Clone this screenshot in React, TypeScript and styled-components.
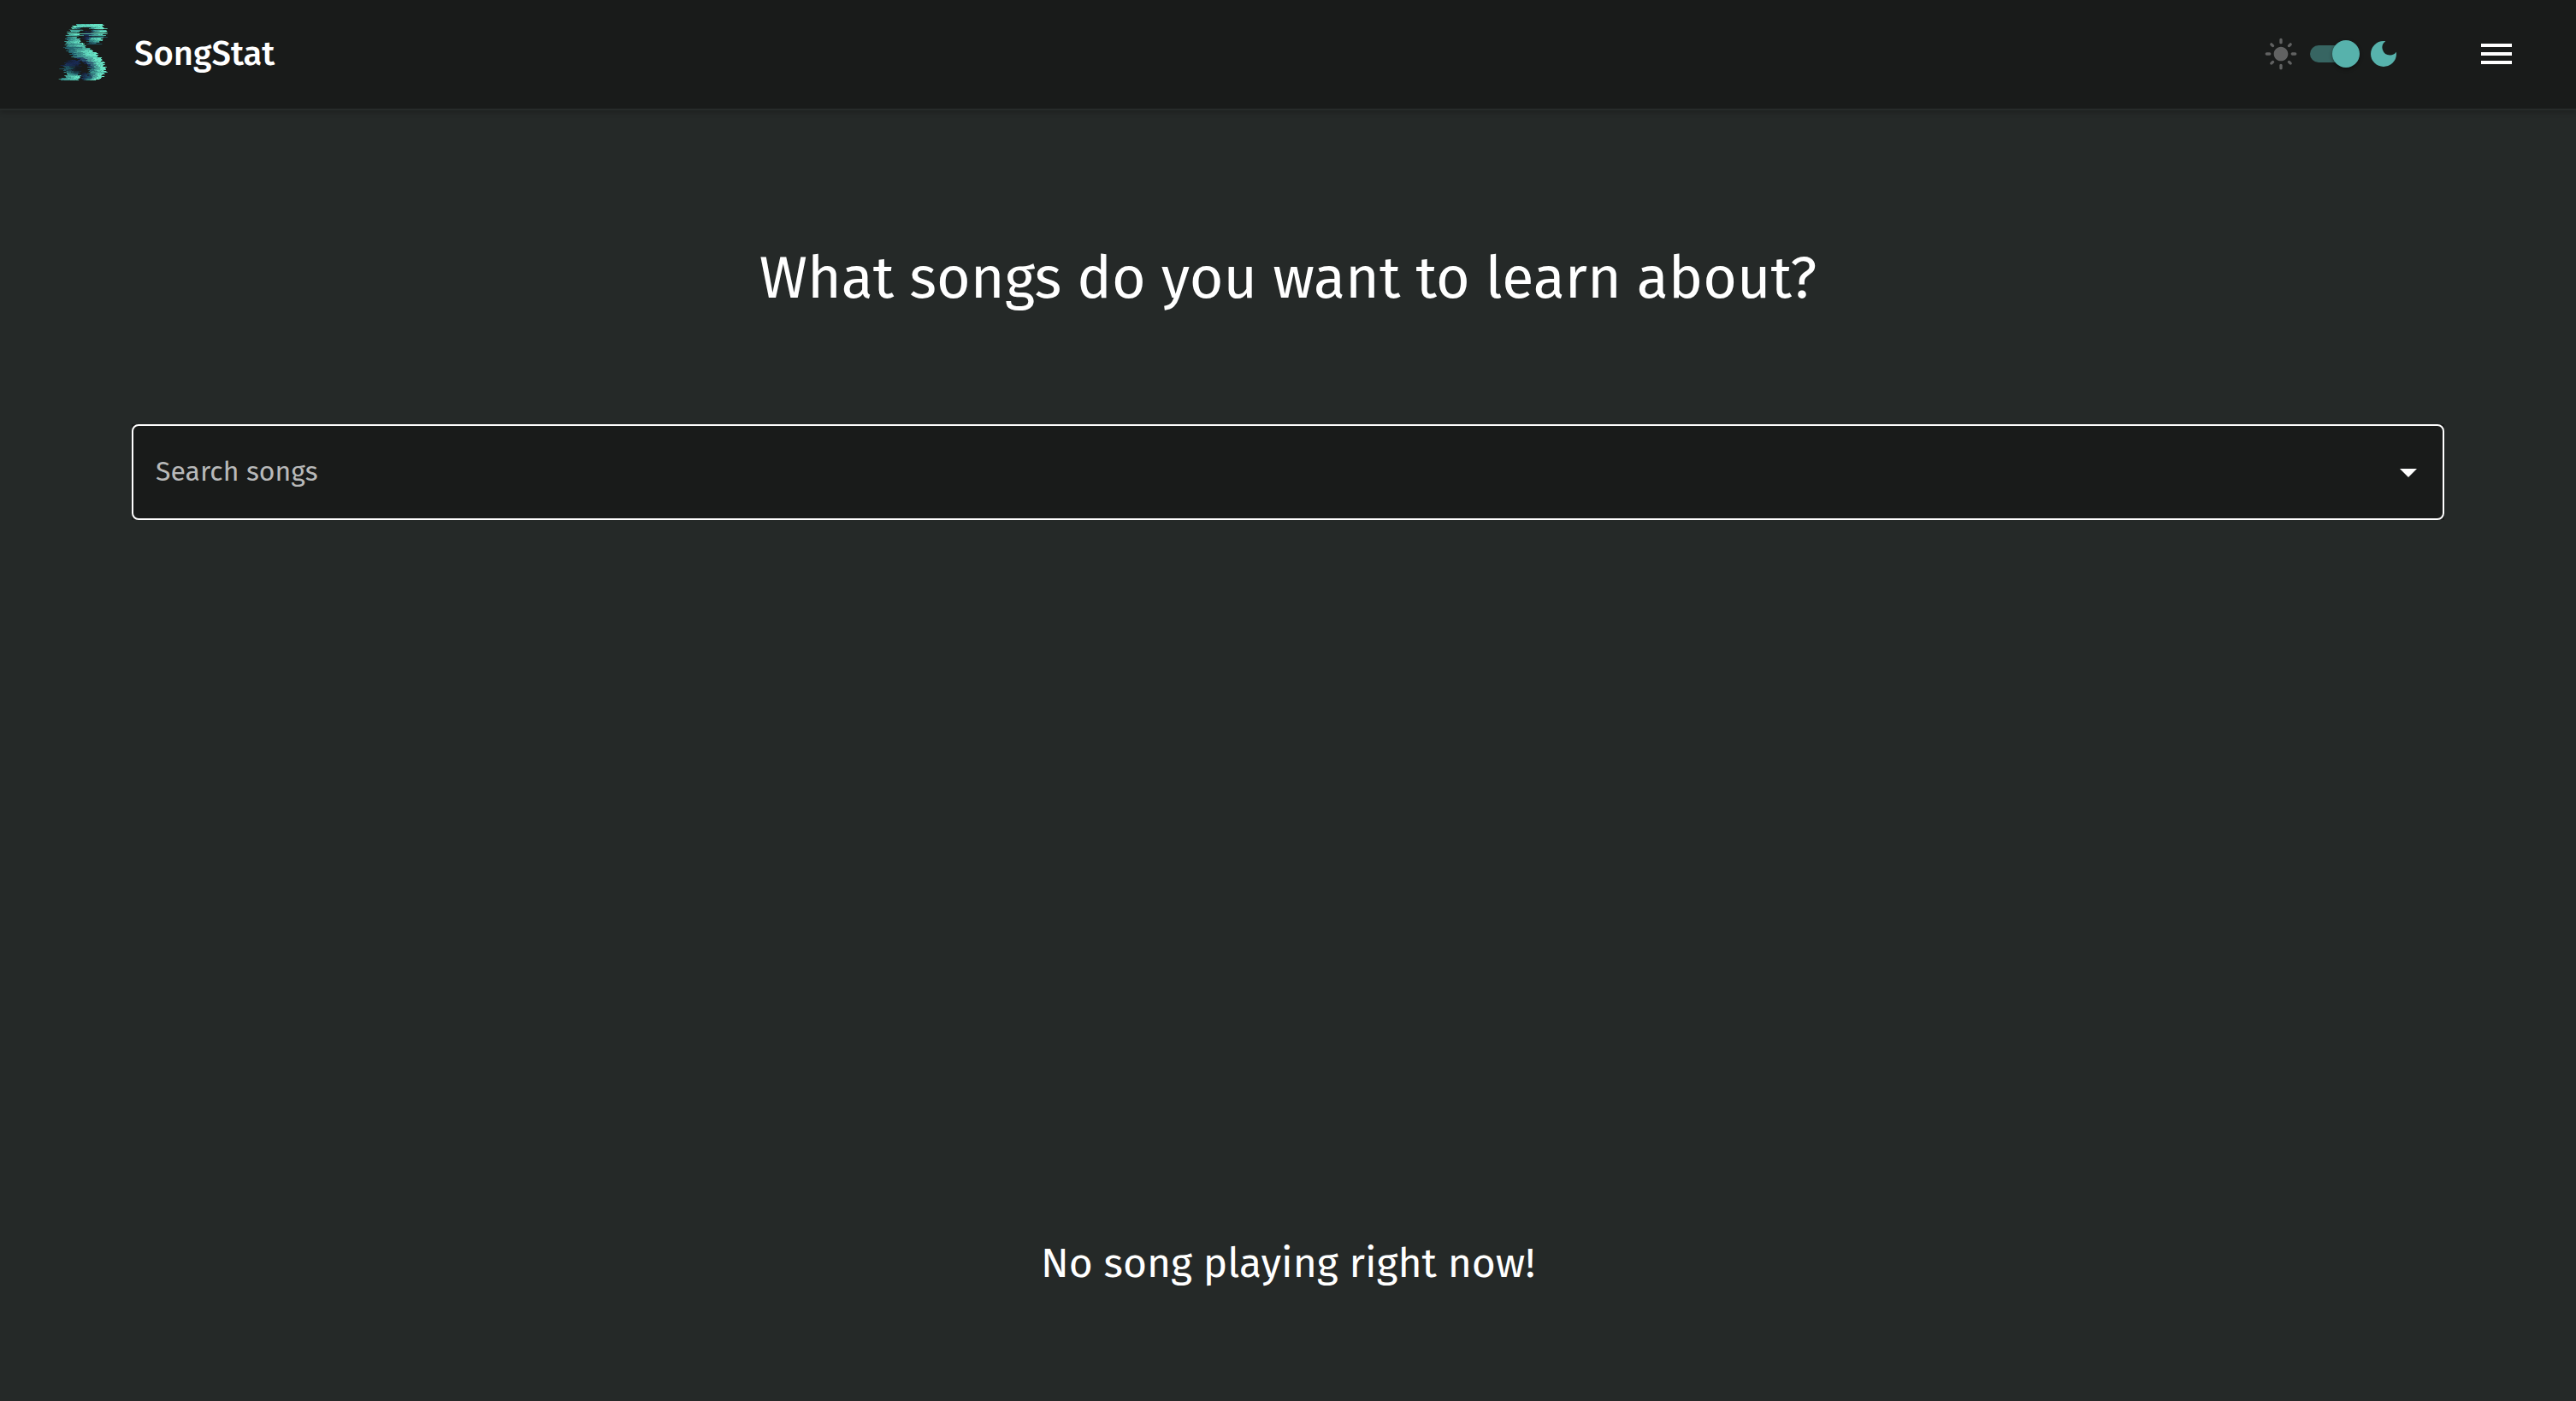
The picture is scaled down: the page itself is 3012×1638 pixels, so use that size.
import React, { useState } from "react";
import styled, { createGlobalStyle } from "styled-components";
import { MdArrowDropDown, MdDarkMode, MdLightMode, MdMenu } from "react-icons/md";

const color = {
  page: "#252928",
  surface: "#191b1a",
  line: "#272b2a",
  text: "#ffffff",
  muted: "#b8b9b9",
  disabled: "#616262",
  accent: "#57b2ac",
  track: "#376562",
};

const GlobalStyle = createGlobalStyle`
  *, *::before, *::after { box-sizing: border-box; }
  body {
    margin: 0;
    background: ${color.page};
    color: ${color.text};
    font-family: "Fira Sans", "Open Sans", "Noto Sans", sans-serif;
  }
`;

const Page = styled.div`
  display: flex;
  flex-direction: column;
  min-height: 100vh;
`;

const Header = styled.header`
  display: flex;
  align-items: center;
  justify-content: space-between;
  padding: 27px 69px 28px 67px;
  background: ${color.surface};
  border-bottom: 2px solid ${color.line};
  box-shadow: 0 2px 6px rgba(0, 0, 0, 0.24);
`;

const Brand = styled.a`
  display: flex;
  align-items: center;
  gap: 30px;
  color: inherit;
  text-decoration: none;
`;

const BrandName = styled.span`
  font-size: 40px;
  line-height: 48px;
  font-weight: 500;
`;

const Actions = styled.div`
  display: flex;
  align-items: center;
  gap: 88px;
`;

const ThemeSwitch = styled.label`
  display: flex;
  align-items: center;
  cursor: pointer;
`;

const ThemeIcon = styled.span<{ $active: boolean }>`
  display: flex;
  font-size: 40px;
  color: ${(p) => (p.$active ? color.accent : color.disabled)};
`;

const Toggle = styled.input`
  appearance: none;
  display: flex;
  align-items: center;
  width: 52px;
  height: 20px;
  margin: 0 14px;
  border-radius: 10px;
  background: ${color.track};
  cursor: pointer;

  &::before {
    content: "";
    flex: none;
    width: 32px;
    height: 32px;
    margin-left: -6px;
    border-radius: 50%;
    background: ${color.accent};
    box-shadow: 0 2px 4px rgba(0, 0, 0, 0.4);
  }

  &:checked::before {
    margin-left: 26px;
  }
`;

const IconButton = styled.button`
  display: flex;
  padding: 0;
  border: 0;
  background: none;
  color: ${color.text};
  font-size: 48px;
  cursor: pointer;
`;

const Main = styled.main`
  flex: 1;
  display: flex;
  flex-direction: column;
  padding: 148px 154px 113px;
`;

const Heading = styled.h1`
  margin: 0;
  font-size: 68px;
  line-height: 96px;
  font-weight: 400;
  text-align: center;
`;

const SearchSurface = styled.div`
  margin-top: 123px;
  background: ${color.surface};
`;

const SearchField = styled.div`
  display: flex;
  align-items: center;
  height: 112px;
  padding: 0 16px 0 26px;
  border: 2px solid ${color.text};
  border-radius: 8px;
`;

const SearchInput = styled.input`
  flex: 1;
  min-width: 0;
  padding: 0 0 2px;
  border: 0;
  outline: 0;
  background: none;
  color: ${color.text};
  font-family: inherit;
  font-size: 32px;
  line-height: 48px;

  &::placeholder {
    color: ${color.muted};
    opacity: 1;
  }
`;

const NowPlaying = styled.p`
  margin: auto 0 0;
  font-size: 48px;
  line-height: 96px;
  text-align: center;
`;

/* Ribbons of the glitched S: [y, left, right, left colour, right colour]. */
type Key = [number, number, number, number[], number[]];
const mint = [103, 228, 197];
const teal = [67, 168, 155];
const deep = [32, 92, 106];
const navy = [25, 42, 84];
const ink = [22, 28, 36];

const ribbons: Key[][] = [
  [
    [54, 117, 203, teal, mint],
    [60, 106, 208, mint, mint],
    [66, 98, 136, mint, deep],
    [78, 90, 126, teal, teal],
    [90, 84, 120, teal, mint],
    [102, 80, 122, deep, teal],
    [120, 80, 134, teal, mint],
    [138, 80, 158, deep, teal],
    [150, 88, 178, deep, mint],
    [162, 100, 190, deep, mint],
    [174, 116, 202, navy, mint],
    [186, 140, 208, navy, mint],
    [198, 156, 214, navy, mint],
    [213, 162, 218, deep, mint],
    [225, 160, 214, deep, mint],
    [237, 152, 208, navy, mint],
    [246, 144, 196, deep, mint],
    [252, 156, 182, teal, mint],
  ],
  [
    [63, 154, 208, teal, mint],
    [72, 172, 214, deep, mint],
    [84, 160, 216, navy, mint],
    [96, 150, 212, navy, teal],
    [105, 152, 206, teal, mint],
    [114, 156, 198, deep, teal],
    [126, 160, 180, ink, navy],
  ],
  [
    [78, 140, 158, ink, navy],
    [96, 140, 162, navy, navy],
    [111, 142, 162, ink, navy],
  ],
  [
    [180, 84, 118, ink, navy],
    [192, 76, 128, navy, navy],
    [204, 72, 130, deep, ink],
    [216, 72, 126, deep, ink],
    [228, 82, 126, teal, deep],
    [237, 76, 128, teal, mint],
    [246, 66, 124, deep, mint],
    [252, 60, 114, teal, teal],
  ],
  [
    [225, 130, 150, ink, navy],
    [243, 134, 168, navy, deep],
    [252, 140, 160, ink, teal],
  ],
];

/* Long tears that run across the upper bowl and lower tail. */
const tears: [number, number, number, number[]][] = [
  [69, 180, 225, mint],
  [75, 94, 140, teal],
  [75, 176, 222, teal],
  [81, 176, 225, mint],
  [87, 86, 225, mint],
  [93, 84, 142, teal],
  [93, 160, 218, teal],
  [99, 168, 225, deep],
  [123, 84, 136, deep],
  [123, 150, 206, deep],
  [135, 70, 136, deep],
  [168, 98, 190, teal],
  [198, 60, 112, navy],
  [210, 56, 104, deep],
  [222, 164, 226, teal],
  [246, 54, 122, teal],
];

const jitter = [0, 5, -4, 2, 7, -6, 1, -2, 6, -5, 3];
const mix = (a: number, b: number, t: number) => a + (b - a) * t;
const rgb = (a: number[], b: number[], t: number) =>
  `rgb(${a.map((v, i) => Math.round(mix(v, b[i], t))).join(",")})`;

function drawRibbon(keys: Key[], r: number) {
  const cells: React.ReactElement[] = [];
  for (let k = 0; k < keys.length - 1; k++) {
    const [y0, l0, r0, a0, b0] = keys[k];
    const [y1, l1, r1, a1, b1] = keys[k + 1];
    for (let y = y0; y < y1; y += 3) {
      const t = (y - y0) / (y1 - y0);
      const row = y / 3 + r * 4;
      const left = mix(l0, l1, t) + jitter[row % 11];
      const right = mix(r0, r1, t) + jitter[(row * 3 + 2) % 11];
      const a = a0.map((v, i) => mix(v, a1[i], t));
      const b = b0.map((v, i) => mix(v, b1[i], t));
      const step = (right - left) / 6;
      for (let s = 0; s < 6; s++) {
        const shade = Math.min(1, Math.max(0, s / 4 + jitter[(row * 2 + s) % 11] / 40));
        cells.push(
          <rect key={`${r}-${y}-${s}`} x={left + s * step} y={y} width={step + 0.4} height={3} fill={rgb(a, b, shade)} />
        );
      }
    }
  }
  return cells;
}

const Logo = () => (
  <svg width="60" height="72" viewBox="49 51 180 216" aria-hidden="true">
    {ribbons.map(drawRibbon)}
    {tears.map(([y, l, r, c]) => (
      <rect key={`${y}-${l}`} x={l} y={y} width={r - l} height={3} fill={rgb(c, c, 0)} opacity={0.75} />
    ))}
    {[72, 84, 96].map((y) => (
      <rect key={y} x={82} y={y} width={144} height={2} fill={color.surface} />
    ))}
  </svg>
);

export default function App() {
  const [dark, setDark] = useState(true);
  return (
    <>
      <GlobalStyle />
      <Page>
        <Header>
          <Brand href="#">
            <Logo />
            <BrandName>SongStat</BrandName>
          </Brand>
          <Actions>
            <ThemeSwitch>
              <ThemeIcon $active={!dark}>
                <MdLightMode />
              </ThemeIcon>
              <Toggle
                type="checkbox"
                role="switch"
                aria-label="Dark mode"
                checked={dark}
                onChange={(e) => setDark(e.target.checked)}
              />
              <ThemeIcon $active={dark}>
                <MdDarkMode />
              </ThemeIcon>
            </ThemeSwitch>
            <IconButton type="button" aria-label="Menu">
              <MdMenu />
            </IconButton>
          </Actions>
        </Header>
        <Main>
          <Heading>What songs do you want to learn about?</Heading>
          <SearchSurface>
            <SearchField>
              <SearchInput type="text" role="combobox" aria-expanded={false} aria-label="Search songs" placeholder="Search songs" />
              <IconButton type="button" aria-label="Open">
                <MdArrowDropDown />
              </IconButton>
            </SearchField>
          </SearchSurface>
          <NowPlaying>No song playing right now!</NowPlaying>
        </Main>
      </Page>
    </>
  );
}
